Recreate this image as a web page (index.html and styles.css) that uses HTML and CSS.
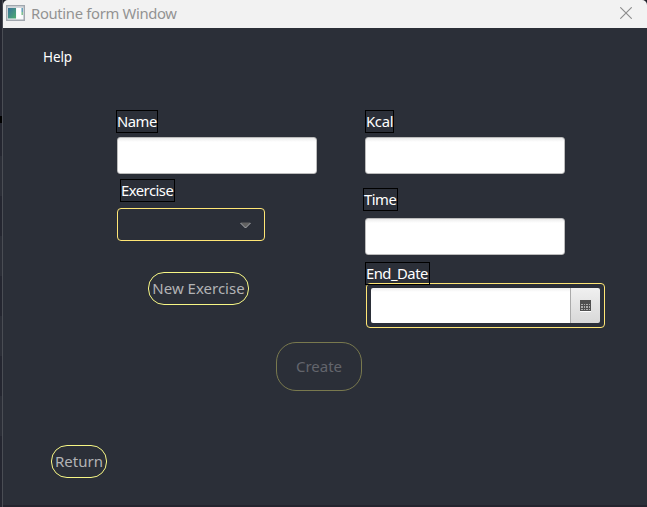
FILE: index.html
```html
<!DOCTYPE html>
<html lang="en">
<head>
<meta charset="utf-8">
<title>Routine form Window</title>
<link rel="stylesheet" href="styles.css">
</head>
<body>
<div class="edge"></div>
<main class="window">
  <header class="titlebar">
    <svg class="app-icon" width="19" height="16" viewBox="0 0 19 16">
      <rect x=".75" y=".75" width="17.5" height="14.5" fill="#f8fafb" stroke="#a1a7ae" stroke-width="1.5"/>
      <path d="M1 2.2h17" stroke="#c3c8ce"/>
      <defs><linearGradient id="g" x1="0" y1="0" x2="1" y2="1"><stop offset="0" stop-color="#39719c"/><stop offset="1" stop-color="#4fae70"/></linearGradient></defs>
      <rect x="2" y="3" width="8" height="10.5" fill="url(#g)"/>
      <rect x="11" y="3" width="4" height="10" fill="#fff"/>
      <path d="M16.2 3v4" stroke="#5798b4" stroke-width="1.4"/><path d="M16.2 7v3" stroke="#72bd86" stroke-width="1.4"/>
    </svg>
    <span class="title">Routine form Window</span>
    <svg class="close" width="12" height="12" viewBox="0 0 12 12"><path d="M.3.3l11.4 11.4M11.7.3L.3 11.7" stroke="#8b8b8b" stroke-width="1.1"/></svg>
  </header>
  <nav class="menu"><span class="help">Help</span></nav>
  <section class="form">
    <div class="left">
      <label class="label name">Name</label>
      <div class="input"></div>
      <label class="label exercise">Exercise</label>
      <div class="combo"><svg width="11" height="7" viewBox="0 0 11 7"><path d="M.5.5h10l-5 5z" fill="#626262"/><path d="M.5 1l5 5 5-5" fill="none" stroke="#b5b6b8" stroke-width="1"/></svg></div>
      <button class="pill new"><span>New Exercise</span></button>
    </div>
    <div class="right">
      <label class="label kcal">Kcal</label>
      <div class="input"></div>
      <label class="label time">Time</label>
      <div class="input second"></div>
      <label class="label end">End_Date</label>
      <div class="date">
        <div class="date-field"></div>
        <div class="date-button"><svg width="11" height="12" viewBox="0 0 11 12" shape-rendering="crispEdges"><path d="M0 0h11v11H0z" fill="#505050"/><path d="M1 4h2v1H1zM4 4h1v1H4zM6 4h2v1H6zM9 4h1v1H9zM1 6h2v2H1zM4 6h1v2H4zM6 6h2v2H6zM9 6h1v2H9zM1 9h2v1H1zM4 9h1v1H4zM6 9h2v1H6zM9 9h1v1H9z" fill="#adadad"/><path d="M0 11h11v1H0z" fill="#fff"/></svg></div>
      </div>
    </div>
  </section>
  <button class="pill create"><span>Create</span></button>
  <button class="pill return"><span>Return</span></button>
</main>
</body>
</html>
```
FILE: styles.css
```css
* { box-sizing: border-box; }
body {
  margin: 0;
  width: 647px;
  height: 507px;
  display: flex;
  overflow: hidden;
  background: #20222b;
  font-family: "Noto Sans", "Open Sans", sans-serif;
}
.edge {
  width: 3px;
  flex: none;
  border-right: 1px solid #4a4d54;
  background:
    linear-gradient(#000, #000) 0 116px / 3px 7px no-repeat,
    linear-gradient(#2b2e37, #2b2e37) 0 156px / 3px 40px no-repeat,
    linear-gradient(#2b2e37, #2b2e37) 0 236px / 3px 40px no-repeat,
    linear-gradient(#2b2e37, #2b2e37) 0 316px / 3px 40px no-repeat,
    linear-gradient(#2b2e37, #2b2e37) 0 396px / 3px 40px no-repeat,
    #242630;
}
.window {
  width: 644px;
  display: flex;
  flex-direction: column;
  align-items: flex-start;
  background: #2b2f38;
  border-bottom: 2px solid #24242e;
  border-radius: 5px 5px 0 0;
}
.titlebar {
  width: 100%;
  height: 28px;
  flex: none;
  display: flex;
  align-items: center;
  padding: 0 15px 3px 3px;
  background: #f2f2f2;
  border-radius: 5px 5px 0 0;
}
.title {
  margin: 0 auto 0 6px;
  font-size: 14.8px;
  line-height: 20px;
  letter-spacing: -0.32px;
  color: #929292;
}
.menu { height: 82px; flex: none; padding: 20px 0 0 40px; }
.help {
  display: block;
  font-size: 13.5px;
  line-height: 19px;
  letter-spacing: -0.1px;
  color: #fff;
}
.form { display: flex; height: 232px; flex: none; padding-left: 113px; }
.left { width: 247px; display: flex; flex-direction: column; align-items: flex-start; }
.right { display: flex; flex-direction: column; align-items: flex-start; }
.label {
  height: 23px;
  flex: none;
  border: 1px solid #000;
  color: #fff;
  font-size: 14.8px;
  line-height: 21px;
  letter-spacing: -0.5px;
  white-space: nowrap;
}
.name { width: 42px; }
.exercise { width: 55px; margin: 5px 0 6px 4px; }
.kcal { width: 29px; margin-left: 2px; letter-spacing: -0.3px; }
.time { width: 35px; margin: 14px 0 7px; }
.end { width: 65px; margin: 7px 0 0 2px; position: relative; z-index: 1; }
.input {
  width: 200px;
  height: 37px;
  flex: none;
  margin: 4px 0 0 1px;
  border: 1px solid #bcbcbc;
  border-radius: 3px;
  background: linear-gradient(#ececec, #fff 4px);
}
.right .input { margin-left: 2px; }
.right .second { margin-top: 0; }
.combo {
  width: 148px;
  height: 33px;
  margin-left: 1px;
  display: flex;
  align-items: center;
  justify-content: flex-end;
  padding: 1px 13px 0 0;
  border: 1px solid #ffe675;
  border-radius: 4px;
}
.pill {
  display: flex;
  align-items: center;
  justify-content: center;
  flex: none;
  padding: 0;
  border: 1.5px solid #f7f785;
  background: transparent;
  color: #b2b3b5;
  font: 15px/21px "Noto Sans", "Open Sans", sans-serif;
  white-space: nowrap;
}
.new { width: 101px; height: 33px; margin: 31px 0 0 32px; border-radius: 16px; }
.create { width: 86px; height: 49px; margin-left: 273px; border-radius: 20px; border-color: #79794e; color: #63656c; }
.return { width: 56px; height: 33px; margin: 54px 0 0 48px; border-radius: 16px; }
.date {
  width: 239px;
  height: 45px;
  flex: none;
  display: flex;
  margin: -2px 0 0 3px;
  padding: 4px;
  border: 1px solid #ffe675;
  border-radius: 4px;
}
.date-field { width: 199px; background: linear-gradient(#ededed, #fff 4px); border-radius: 2px 0 0 2px; }
.date-button {
  width: 30px;
  display: flex;
  align-items: center;
  justify-content: center;
  border-left: 1px solid #aaa;
  border-radius: 0 2px 2px 0;
  background: linear-gradient(#f0f0f0, #d8d8d8);
}
```
